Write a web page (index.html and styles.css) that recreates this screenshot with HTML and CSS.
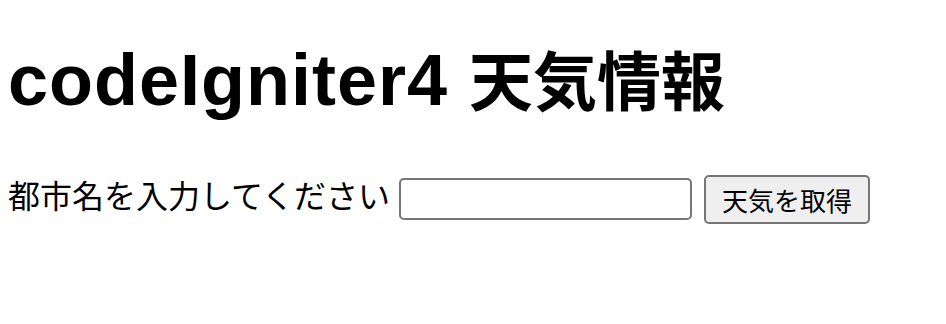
FILE: index.html
```html
<!DOCTYPE html>
<html lang="ja">

<head>
    <meta charset="UTF-8">
    <title>天気情報</title>
    <link rel="stylesheet" href="styles.css">
</head>

<body>
    <h1 class="title">codeIgniter4 <span class="title_jp">天気情報</span></h1>
    <form action="" method="get" class="weather_form">
        <label for="city" class="city_label">都市名を入力してください</label>
        <input type="text" name="city" id="city" class="city_input">
        <input type="submit" value="天気を取得" class="btn_get">
    </form>
</body>

</html>
```

FILE: styles.css
```css
body {
    margin: 0;
    padding: 0 8px;
    font-family: "Liberation Sans", "Noto Sans CJK JP", sans-serif;
    color: #000;
    background: #fff;
}

.title {
    margin: 40px 0 0 0;
    font-size: 72px;
    line-height: 80px;
    letter-spacing: 1px;
    font-weight: bold;
}

.title_jp {
    font-family: "Noto Sans CJK JP", sans-serif;
    font-size: 64px;
    line-height: 1;
    letter-spacing: 0;
}

.weather_form {
    display: flex;
    align-items: center;
    margin-top: 54px;
}

.city_label {
    font-family: "Noto Sans CJK JP", sans-serif;
    font-size: 32px;
    line-height: 40px;
    padding-bottom: 10px;
}

.city_input {
    width: 293px;
    height: 42px;
    margin-left: 9px;
    border: 2px solid #767676;
    border-radius: 5px;
    box-sizing: border-box;
    padding: 2px 6px;
    font-size: 26px;
}

.btn_get {
    width: 166px;
    height: 49px;
    margin-left: 12px;
    border: 2px solid #767676;
    border-radius: 5px;
    background: #efefef;
    box-sizing: border-box;
    font-family: "Noto Sans CJK JP", sans-serif;
    font-size: 26px;
    color: #000;
    padding: 0 10px;
}
```
